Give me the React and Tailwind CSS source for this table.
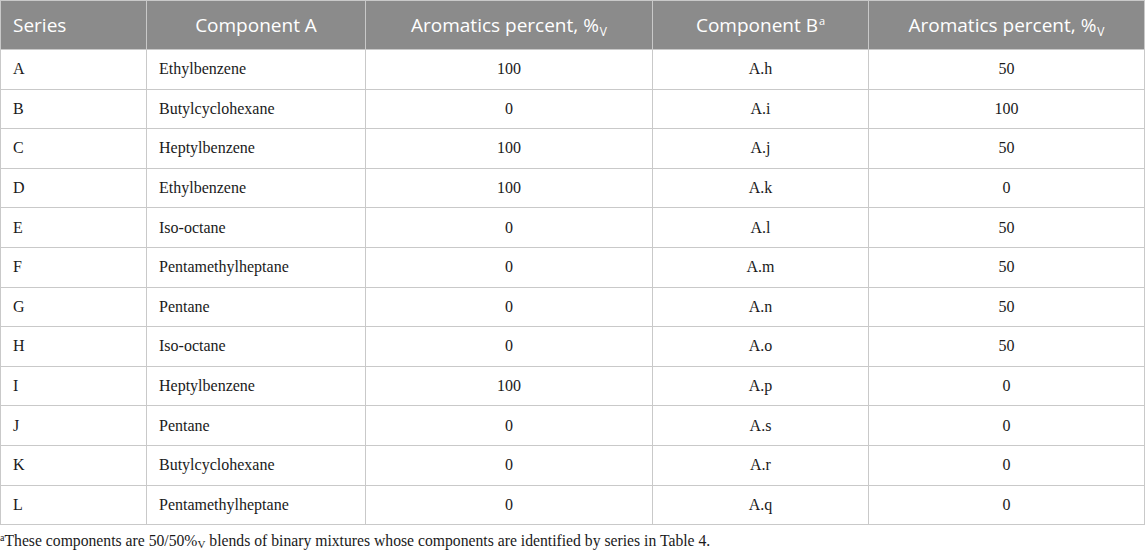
import React from 'react';

const rows = [
  ['A', 'Ethylbenzene', '100', 'A.h', '50'],
  ['B', 'Butylcyclohexane', '0', 'A.i', '100'],
  ['C', 'Heptylbenzene', '100', 'A.j', '50'],
  ['D', 'Ethylbenzene', '100', 'A.k', '0'],
  ['E', 'Iso-octane', '0', 'A.l', '50'],
  ['F', 'Pentamethylheptane', '0', 'A.m', '50'],
  ['G', 'Pentane', '0', 'A.n', '50'],
  ['H', 'Iso-octane', '0', 'A.o', '50'],
  ['I', 'Heptylbenzene', '100', 'A.p', '0'],
  ['J', 'Pentane', '0', 'A.s', '0'],
  ['K', 'Butylcyclohexane', '0', 'A.r', '0'],
  ['L', 'Pentamethylheptane', '0', 'A.q', '0'],
];

const Pv = () => (
  <>
    %<span className="relative top-[4px] text-[12px] ml-[1px]">V</span>
  </>
);

export default function App() {
  const th = 'h-[49px] border border-[#c9c9c9] font-normal text-white text-[19px] px-3';
  const td = 'h-[39.6px] border border-[#c9c9c9] text-[16px] text-[#1a1a1a] px-3';
  return (
    <div className="w-[1145px] bg-white">
      <table className="w-[1144px] table-fixed border-collapse">
        <colgroup>
          <col className="w-[146px]" />
          <col className="w-[219px]" />
          <col className="w-[287px]" />
          <col className="w-[216px]" />
          <col className="w-[276px]" />
        </colgroup>
        <thead className="bg-[#8b8b8b] font-['Open_Sans',sans-serif]">
          <tr>
            <th className={`${th} text-left`}>Series</th>
            <th className={`${th} text-center`}>Component A</th>
            <th className={`${th} text-center`}>Aromatics percent, <Pv /></th>
            <th className={`${th} text-center`}>
              Component B<span className="relative -top-[7px] text-[11px] ml-[1px]">a</span>
            </th>
            <th className={`${th} text-center`}>Aromatics percent, <Pv /></th>
          </tr>
        </thead>
        <tbody className="font-['Liberation_Serif',serif]">
          {rows.map((r) => (
            <tr key={r[0]}>
              <td className={`${td} text-left`}>{r[0]}</td>
              <td className={`${td} text-left`}>{r[1]}</td>
              <td className={`${td} text-center`}>{r[2]}</td>
              <td className={`${td} text-center`}>{r[3]}</td>
              <td className={`${td} text-center`}>{r[4]}</td>
            </tr>
          ))}
        </tbody>
      </table>
      <p className="mt-[6px] font-['Liberation_Serif',serif] text-[15.7px] leading-[20px] text-[#1a1a1a]">
        <span className="relative -top-[5px] text-[10px]">a</span>These components are 50/50%
        <span className="relative top-[2px] text-[11px]">V</span> blends of binary mixtures whose components are identified by series in Table 4.
      </p>
    </div>
  );
}
